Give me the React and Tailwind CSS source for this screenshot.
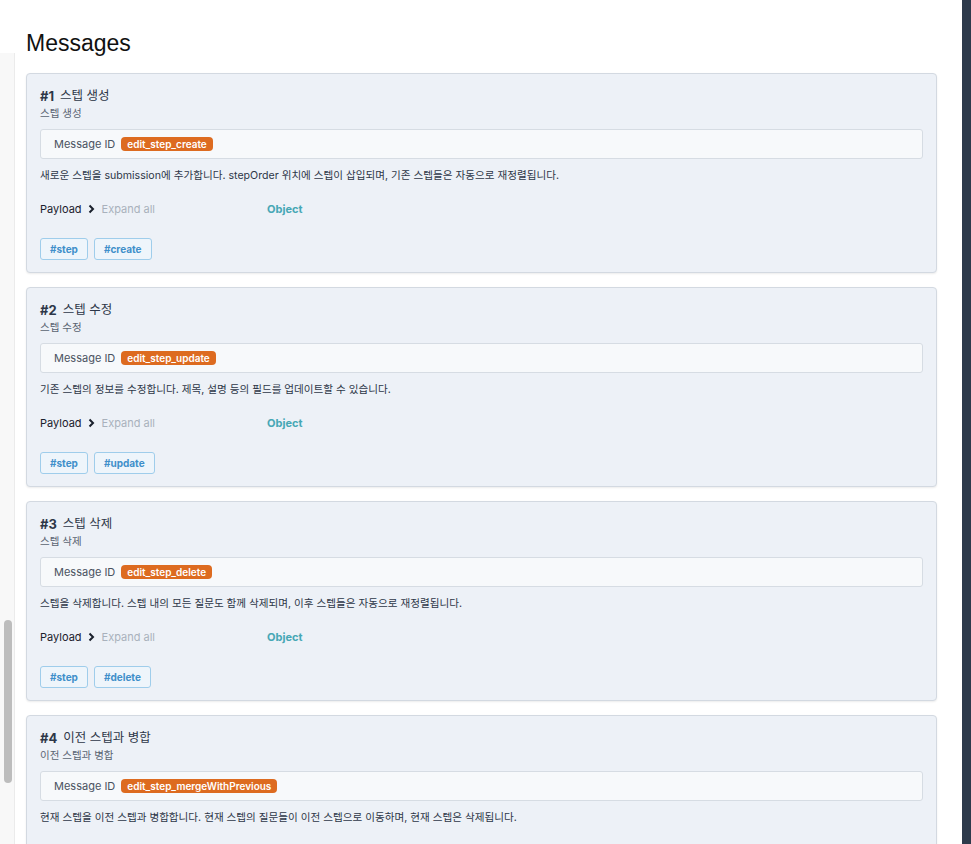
import React from "react";

const messages = [
  {
    no: 1,
    title: "스텝 생성",
    summary: "스텝 생성",
    id: "edit_step_create",
    description:
      "새로운 스텝을 submission에 추가합니다. stepOrder 위치에 스텝이 삽입되며, 기존 스텝들은 자동으로 재정렬됩니다.",
    tags: ["step", "create"],
  },
  {
    no: 2,
    title: "스텝 수정",
    summary: "스텝 수정",
    id: "edit_step_update",
    description: "기존 스텝의 정보를 수정합니다. 제목, 설명 등의 필드를 업데이트할 수 있습니다.",
    tags: ["step", "update"],
  },
  {
    no: 3,
    title: "스텝 삭제",
    summary: "스텝 삭제",
    id: "edit_step_delete",
    description: "스텝을 삭제합니다. 스텝 내의 모든 질문도 함께 삭제되며, 이후 스텝들은 자동으로 재정렬됩니다.",
    tags: ["step", "delete"],
  },
  {
    no: 4,
    title: "이전 스텝과 병합",
    summary: "이전 스텝과 병합",
    id: "edit_step_mergeWithPrevious",
    description: "현재 스텝을 이전 스텝과 병합합니다. 현재 스텝의 질문들이 이전 스텝으로 이동하며, 현재 스텝은 삭제됩니다.",
    tags: ["step", "merge"],
  },
];

const font = { fontFamily: '"Inter", "Noto Sans CJK KR", sans-serif' };

const MessageCard = ({ msg }) => (
  <div className="bg-[#edf1f7] border border-[#d3d9e1] rounded-[4px] shadow-[0_1px_2px_rgba(0,0,0,0.08)] px-[13px] pt-[13px] pb-[12px]">
    {/* Title */}
    <div className="flex items-center gap-[6px] text-[12.5px] leading-[18px] text-[#2d3748]">
      <span className="font-bold text-[13px]">#{msg.no}</span>
      <span>{msg.title}</span>
    </div>
    <div className="mt-[1px] text-[10.5px] leading-[16px] text-[#5a6472]">{msg.summary}</div>

    {/* Message ID */}
    <div className="mt-[7px] h-[30px] flex items-center px-[13px] bg-[#f7f9fb] border border-[#d6dce3] rounded-[3px]">
      <span className="text-[11px] text-[#4a5260]">Message ID</span>
      <span className="ml-[6px] bg-[#dd6b20] text-white font-semibold text-[10px] leading-[14px] px-[6px] rounded-[4px]">
        {msg.id}
      </span>
    </div>

    <p className="mt-[9px] text-[10.6px] leading-[16px] text-[#2d3748]">{msg.description}</p>

    {/* Payload */}
    <div className="mt-[16px] flex items-center h-[18px] text-[11px]">
      <span className="text-[#1a202c]">Payload</span>
      <svg className="ml-[6px]" width="7" height="10" viewBox="0 0 7 10">
        <path d="M1.5 1.5 L5 5 L1.5 8.5" fill="none" stroke="#1a202c" strokeWidth="2" />
      </svg>
      <span className="ml-[7px] text-[#a9b1bc]">Expand all</span>
      <span className="ml-[112px] font-bold text-[#46a7b5]">Object</span>
    </div>

    {/* Tags */}
    <div className="mt-[20px] flex gap-[6px]">
      {msg.tags.map((t) => (
        <span
          key={t}
          className="h-[22px] flex items-center px-[9px] border border-[#9fcdeb] bg-[#eef5fb] rounded-[3px] text-[10px] font-bold text-[#3f8fca]"
        >
          #{t}
        </span>
      ))}
    </div>
  </div>
);

export default function App() {
  return (
    <div className="flex min-h-screen bg-white" style={font}>
      {/* left scroll track */}
      <div className="w-[15px] shrink-0 flex flex-col">
        <div className="h-[53px]" />
        <div className="flex-1 bg-[#f8f8f8] border-r border-[#ebebeb] px-[4px]">
          <div className="mt-[567px] h-[163px] w-[8px] rounded-full bg-[#bdbdbd]" />
        </div>
      </div>

      {/* main */}
      <div className="flex-1 pl-[11px] pr-[25px] pt-[27px] pb-[20px]">
        <h2
          className="text-[23px] leading-[32px] text-[#111] mb-[14px]"
          style={{ fontFamily: '"Liberation Sans", Arial, sans-serif' }}
        >
          Messages
        </h2>
        <div className="flex flex-col gap-[14px]">
          {messages.map((m) => (
            <MessageCard key={m.no} msg={m} />
          ))}
        </div>
      </div>

      {/* right dark panel edge */}
      <div className="w-[9px] shrink-0 bg-[#2d3a4b]" />
    </div>
  );
}
